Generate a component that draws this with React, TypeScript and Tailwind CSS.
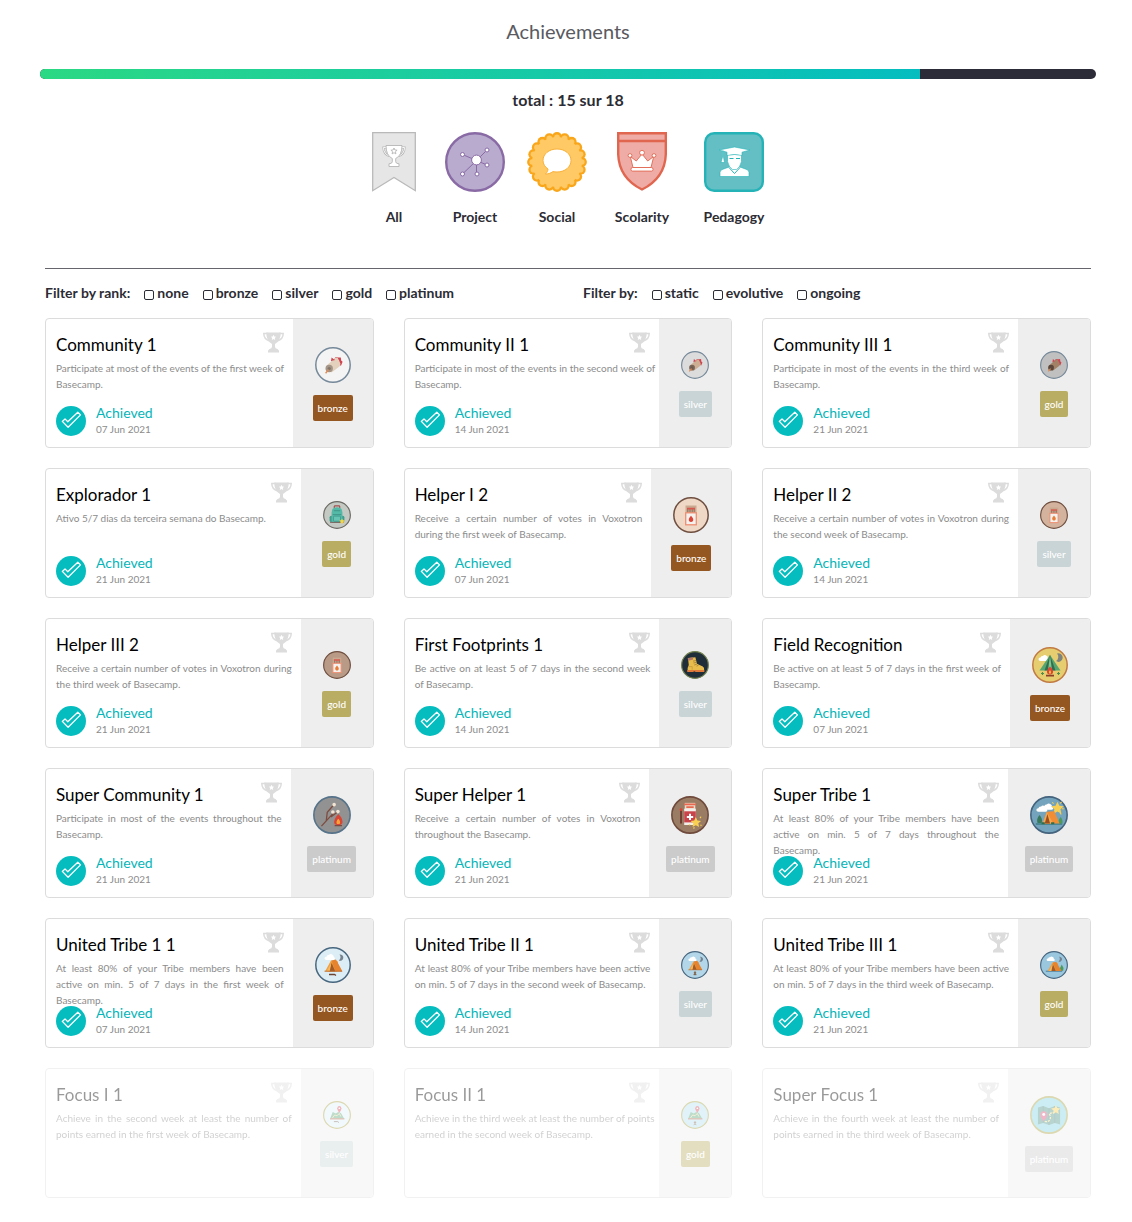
import type { ReactNode } from "react";

type Rank = "bronze" | "silver" | "gold" | "platinum";

type Achievement = {
  title: string;
  lines: string[];
  date?: string;
  rank: Rank;
  art: ReactNode;
};

const panelWidth: Record<Rank, string> = {
  bronze: "w-20",
  silver: "w-[72px]",
  gold: "w-[72px]",
  platinum: "w-[82px]",
};

const badgeSize: Record<Rank, string> = {
  bronze: "size-9",
  silver: "size-7",
  gold: "size-7",
  platinum: "size-[38px]",
};

const labelColor: Record<Rank, string> = {
  bronze: "bg-[#955721]",
  silver: "bg-[#c9d4d6]",
  gold: "bg-[#b9ad63]",
  platinum: "bg-[#cbcbcb]",
};

function Disc({ fill, ring, children }: { fill: string; ring: string; children: ReactNode }) {
  return (
    <svg viewBox="0 0 36 36" className="size-full" aria-hidden="true">
      <circle cx="18" cy="18" r="17.2" fill={fill} stroke={ring} strokeWidth="1.5" />
      {children}
    </svg>
  );
}

const Drum = ({ fill, body, end }: { fill: string; body: string; end: string }) => (
  <Disc fill={fill} ring="#75899a">
    <path d="M16 14l.6-3.6 2.6 2 1.2-2.2 3.400.4 2-.2.4 3 1.400 1.400-1.600 4z" fill="#cf4450" />
    <path d="M11.500 18.500l6-5 2-.3.300-2.200 2.800-.2 1.500 2.600 1.400 3.400-1 2.600-8 6z" fill={body} />
    <circle cx="14.200" cy="21.500" r="3.700" fill={end} />
    <circle cx="14.200" cy="21.500" r="1.600" fill="#5d4b43" opacity=".45" />
    <path d="M13.600 22.600l-3 3.600" stroke="#e08a52" strokeWidth="1.400" />
  </Disc>
);

const Backpack = () => (
  <Disc fill="#c5c9c3" ring="#6d6a64">
    <path d="M14.500 9V7.200q0-1 1-1h5q1 0 1 1V9" fill="none" stroke="#a0504e" strokeWidth="1.500" />
    <rect x="8.500" y="19" width="19" height="8" rx="2" fill="#3f9c8d" />
    <path d="M11 28V15q0-7 7-7t7 7v13z" fill="#55b9a8" />
    <path d="M14 12.500h8M12.500 17.500h11" stroke="#3a8e82" strokeWidth="1" />
    <rect x="13.500" y="19.500" width="9" height="6.500" rx="1" fill="#66c4b4" stroke="#3a8e82" strokeWidth=".8" />
    <path d="M9 27.500h18" stroke="#7d4a46" strokeWidth="1" fill="none" />
    <path d="M24.500 22.400l1.100 2.200 2.500.3-1.800 1.700.4 2.500-2.200-1.200-2.300 1.200.5-2.500-1.800-1.700 2.400-.3z" fill="#f8d648" />
  </Disc>
);

const Matches = ({ fill, flame }: { fill: string; flame: string }) => (
  <Disc fill={fill} ring="#6f4f40">
    <rect x="12.500" y="8.500" width="11" height="8" fill="#c9a98f" />
    <path d="M14.800 12v5M17 12v5M19.200 12v5M21.200 12v5" stroke="#8a6655" strokeWidth=".9" />
    <path d="M14 11.600h8" stroke="#d8584e" strokeWidth="1.800" />
    <rect x="12.700" y="15.800" width="10.600" height="12" fill="#f4f1ee" stroke="#ee8f73" strokeWidth="1.300" />
    <path d="M18 18.800q3 3 2 5.200-2 2.200-4 0-1-2.400 2-5.200z" fill={flame} />
  </Disc>
);

const Boot = () => (
  <Disc fill="#1f2e38" ring="#74824f">
    <path d="M9 9l9.500-1 2 8.500 7.500 3.400q2 1 1.800 5H8.500q-.4-3.500 1.500-7z" fill="#e8bd4c" />
    <path d="M8.500 9.200l7-1.200v3l-6 1.600z" fill="#b5776a" />
    <path d="M8 24.500h22v2.600H19l-2-1-1.500 1H8z" fill="#e0793a" />
    <path d="M15.500 13l4-.8M16 15.400l4-.8M17 18l3.400-1M20 19.400l2.400-1" stroke="#8a6a2a" strokeWidth=".8" />
    <path d="M9.400 20h5v4" fill="none" stroke="#c39a36" strokeWidth=".9" />
  </Disc>
);

const Cloud = ({ x = 0, y = 0 }: { x?: number; y?: number }) => (
  <path
    transform={`translate(${x} ${y})`}
    d="M8 13.500q-2 0-2-1.700t2-1.600q.4-2 2.400-1.600Q12 6.600 14 8.300q1.600.6 1.200 2.300 1.600.4 1.200 1.700-.3 1.200-1.600 1.200z"
    fill="#fff"
  />
);

const Field = () => (
  <Disc fill="#e6cd70" ring="#c17a42">
    <Cloud x={0.5} y={0.4} />
    <path d="M25 6.500a4.300 4.300 0 1 1-1 7.600 5 5 0 0 0 1-7.600z" fill="#7e8380" />
    <path d="M18 8L7.500 23.500h21z" fill="#57a670" />
    <path d="M18 8l-5.500 15.500h11z" fill="#2f6e4c" />
    <path d="M18 8l-2 15.500h4z" fill="#84c48f" />
    <path d="M18 19.500q4.500 4 2.600 7-2.600 2-5.200 0-1.800-3 2.600-7z" fill="#dc4632" />
    <path d="M18 23q1.800 2 .8 3.600h-1.600Q16.200 25 18 23z" fill="#f7c04c" />
    <path d="M14 28.600h8" stroke="#8b3f28" strokeWidth="1.600" />
    <path d="M10.500 25v3M9 26.500h3M26.500 25v3M25 26.500h3" stroke="#4d8f4a" strokeWidth="1.100" />
  </Disc>
);

const Campfire = () => (
  <Disc fill="#929292" ring="#56738a">
    <path d="M8 28.500L19.500 16M12.500 24l1-8.500 6-7M17 20l6.500-5" stroke="#7d4c3f" strokeWidth="1.200" fill="none" />
    <circle cx="20" cy="8.200" r="1.700" fill="#f2e4d2" />
    <circle cx="18.800" cy="15.200" r="1.700" fill="#f2e4d2" />
    <circle cx="23.600" cy="14.800" r="1.700" fill="#f2e4d2" />
    <path d="M24 17q5.500 5.500 3.400 9.500-3.400 2.500-7 0-1.600-4 3.600-9.500z" fill="#d64536" />
    <path d="M24 21.500q2.600 2.600 1.200 5h-2.600q-1.200-2.400 1.400-5z" fill="#f6a43a" />
    <path d="M20.500 28h7" stroke="#7d4c3f" strokeWidth="1.200" />
  </Disc>
);

const Star = ({ x, y, r = 1 }: { x: number; y: number; r?: number }) => (
  <path
    transform={`translate(${x} ${y}) scale(${r})`}
    d="M0-5l1.500 3.200 3.500.4-2.600 2.300.7 3.500L0 2.700l-3.100 1.700.7-3.500L-5-1.400l3.500-.4z"
    fill="#f8cf52"
  />
);

const MatchBottle = () => (
  <Disc fill="#997c63" ring="#6f4a3c">
    <rect x="13" y="6.500" width="10" height="7" fill="#ead9c8" />
    <path d="M12.500 8h11M14.500 10.500h7" stroke="#e8694f" strokeWidth="1.700" />
    <rect x="12.500" y="12" width="11" height="15.500" fill="#f2eee9" />
    <rect x="12.500" y="14.500" width="11" height="10.500" fill="#c9444a" />
    <path d="M18 16.800v6M15 19.800h6" stroke="#fff" strokeWidth="1.900" />
    <path d="M9.500 13v13" stroke="#6a3429" strokeWidth="1.600" />
    <circle cx="9.500" cy="13" r="1.300" fill="#d64536" />
    <Star x={23.5} y={25} />
    <path d="M28.500 19.500l-1 1.500M29 28l-1.200-.6M21.500 31l.5-1.500M17 27.500l1.200-.4" stroke="#f8cf52" strokeWidth="1" />
  </Disc>
);

const OrangeTent = () => (
  <>
    <path d="M16 13.500L10 24.500h12l1-10z" fill="#f0a03f" />
    <path d="M16.500 13.500l4.500-1 6.500 12h-7z" fill="#e5832f" />
    <path d="M16.500 15.500l-2.800 9h6.600z" fill="#a35a26" />
    <path d="M16.500 15.500l-5 9h3.200z" fill="#f7b85e" />
  </>
);

const SuperTribe = () => (
  <Disc fill="#74a3bd" ring="#44637d">
    <Cloud x={5.5} y={-0.5} />
    <Cloud x={0} y={1.5} />
    <Star x={26} y={11.5} r={1.2} />
    <path d="M30 5.500l-1.500 1.500M32 12h-1.800M29.500 17.500l-1-1.500M21 6l1.400 1.200" stroke="#f8cf52" strokeWidth="1" />
    <path d="M5.500 26.500h25" stroke="#3f7f86" strokeWidth="1.400" />
    <path d="M9 18q3.500 4 2 7.500H7.200Q5.600 22 9 18z" fill="#37795a" />
    <path d="M29 20q2.600 3.400 1.600 6h-3.400q-1-2.600 1.800-6z" fill="#4c9a5c" />
    <path d="M16 15l7-.5 5 11.500H12z" fill="#f08d35" />
    <path d="M16 15l-4 11h10z" fill="#f5a74b" />
    <path d="M16.500 17l-2.500 9h5z" fill="#9a4f22" />
    <path d="M11 25.800h3M20 25.800h3" stroke="#2f6e4c" strokeWidth="1.800" />
  </Disc>
);

const Tribe = ({ fill, level }: { fill: string; level: 1 | 2 | 3 }) => (
  <Disc fill={fill} ring="#48677f">
    <Cloud x={level === 3 ? 2.5 : 3.5} y={-0.5} />
    <path d="M24.500 7.500a3.200 3.200 0 1 1-.8 6 4 4 0 0 0 .8-6z" fill="#76838e" />
    {level === 3 ? (
      <>
        <path d="M7.500 26h21" stroke="#4b7d94" strokeWidth="1.200" />
        <path d="M28 17.500q3 4 1.800 8h-3.600q-1.200-4 1.800-8z" fill="#4c9a5c" />
        <g transform="translate(0 1.200)">
          <OrangeTent />
        </g>
      </>
    ) : (
      <>
        <OrangeTent />
        <path d="M9.500 24.200h17.500" stroke="#b9713a" strokeWidth=".9" />
      </>
    )}
    {level === 1 && <path d="M14 27.500h5.500l1.500 1" stroke="#6c4433" strokeWidth="1.300" fill="none" />}
    {level === 2 && <path d="M18 26v3l-1.600 2M18 29l1.600 2M16.500 28h3" stroke="#7d5a41" strokeWidth="1.300" fill="none" />}
  </Disc>
);

const Focus = ({ fill, level }: { fill: string; level: 1 | 2 }) => (
  <Disc fill={fill} ring="#a89f3c">
    <path d="M9 23l3.500-9 4 2 3-2 3.500 1.500L27.500 23z" fill="#5aa879" />
    <path d="M12 22l3-4 3 1 3-3 2 4" stroke="#e9d9a6" strokeWidth="1.200" fill="none" />
    <path d="M9 23h18.500" stroke="#c26a55" strokeWidth="1.400" />
    <path d="M21 15.500q-3-4-2.700-6.300Q18.700 6.500 21 6.500t2.700 2.700Q24 11.500 21 15.500z" fill="#dc4a55" />
    <circle cx="21" cy="9.300" r="1.100" fill="#fff" />
    {level === 1 ? (
      <path d="M14 26.500h5l1.500 1.300" stroke="#6c5a50" strokeWidth="1.200" fill="none" />
    ) : (
      <path d="M18 26v3l-1.500 2M18 29l1.500 2M16.500 27.500h3" stroke="#7d5a41" strokeWidth="1.200" fill="none" />
    )}
  </Disc>
);

const SuperFocus = () => (
  <Disc fill="#7fd2e2" ring="#a89f3c">
    <path d="M7.500 11l5-1.500 5.500 2 5.500-2 5 1.500v16l-5-1.500-5.500 2-5.500-2-5 1.500z" fill="#4f9488" />
    <path d="M12.500 9.500v16M18 11.500v16M23.500 9.500v16" stroke="#3a7a74" strokeWidth=".7" />
    <path d="M14 24q4 1 5-2t-1-5q4-2 6-1" stroke="#f4df8f" strokeWidth="1.200" strokeDasharray="2 1" fill="none" />
    <path d="M13 24q-3.500-4-3.200-6.500.4-3 3.200-3t3.200 3Q16.500 20 13 24z" fill="#dc4a75" />
    <circle cx="13" cy="17.500" r="1.400" fill="#fff" />
    <Star x={24.5} y={13} r={0.9} />
  </Disc>
);

const achievements: Achievement[] = [
  { title: "Community 1", lines: ["Participate at most of the events of the first week of", "Basecamp."], date: "07 Jun 2021", rank: "bronze", art: <Drum fill="#f4f4f4" body="#e3d0bd" end="#a39588" /> },
  { title: "Community II 1", lines: ["Participate in most of the events in the second week of", "Basecamp."], date: "14 Jun 2021", rank: "silver", art: <Drum fill="#dcdcdc" body="#cdae93" end="#7a6557" /> },
  { title: "Community III 1", lines: ["Participate in most of the events in the third week of", "Basecamp."], date: "21 Jun 2021", rank: "gold", art: <Drum fill="#c0c0c0" body="#a38167" end="#5c463b" /> },
  { title: "Explorador 1", lines: ["Ativo 5/7 dias da terceira semana do Basecamp."], date: "21 Jun 2021", rank: "gold", art: <Backpack /> },
  { title: "Helper I 2", lines: ["Receive a certain number of votes in Voxotron", "during the first week of Basecamp."], date: "07 Jun 2021", rank: "bronze", art: <Matches fill="#f0d8c6" flame="#dd4336" /> },
  { title: "Helper II 2", lines: ["Receive a certain number of votes in Voxotron during", "the second week of Basecamp."], date: "14 Jun 2021", rank: "silver", art: <Matches fill="#d3b39e" flame="#e87b35" /> },
  { title: "Helper III 2", lines: ["Receive a certain number of votes in Voxotron during", "the third week of Basecamp."], date: "21 Jun 2021", rank: "gold", art: <Matches fill="#b99a87" flame="#e87b35" /> },
  { title: "First Footprints 1", lines: ["Be active on at least 5 of 7 days in the second week", "of Basecamp."], date: "14 Jun 2021", rank: "silver", art: <Boot /> },
  { title: "Field Recognition", lines: ["Be active on at least 5 of 7 days in the first week of", "Basecamp."], date: "07 Jun 2021", rank: "bronze", art: <Field /> },
  { title: "Super Community 1", lines: ["Participate in most of the events throughout the", "Basecamp."], date: "21 Jun 2021", rank: "platinum", art: <Campfire /> },
  { title: "Super Helper 1", lines: ["Receive a certain number of votes in Voxotron", "throughout the Basecamp."], date: "21 Jun 2021", rank: "platinum", art: <MatchBottle /> },
  { title: "Super Tribe 1", lines: ["At least 80% of your Tribe members have been", "active on min. 5 of 7 days throughout the", "Basecamp."], date: "21 Jun 2021", rank: "platinum", art: <SuperTribe /> },
  { title: "United Tribe 1 1", lines: ["At least 80% of your Tribe members have been", "active on min. 5 of 7 days in the first week of", "Basecamp."], date: "07 Jun 2021", rank: "bronze", art: <Tribe fill="#dcedf6" level={1} /> },
  { title: "United Tribe II 1", lines: ["At least 80% of your Tribe members have been active", "on min. 5 of 7 days in the second week of Basecamp."], date: "14 Jun 2021", rank: "silver", art: <Tribe fill="#b3d7e9" level={2} /> },
  { title: "United Tribe III 1", lines: ["At least 80% of your Tribe members have been active", "on min. 5 of 7 days in the third week of Basecamp."], date: "21 Jun 2021", rank: "gold", art: <Tribe fill="#9ac6de" level={3} /> },
  { title: "Focus I 1", lines: ["Achieve in the second week at least the number of", "points earned in the first week of Basecamp."], rank: "silver", art: <Focus fill="#dcf0f8" level={1} /> },
  { title: "Focus II 1", lines: ["Achieve in the third week at least the number of points", "earned in the second week of Basecamp."], rank: "gold", art: <Focus fill="#b3e0ee" level={2} /> },
  { title: "Super Focus 1", lines: ["Achieve in the fourth week at least the number of", "points earned in the third week of Basecamp."], rank: "platinum", art: <SuperFocus /> },
];

function Trophy() {
  return (
    <svg viewBox="0 0 21 21" className="mt-[2px] size-[21px] shrink-0" aria-hidden="true">
      <path d="M5 1.600H.8q0 6 6 7.300M16 1.600h4.200q0 6-6 7.300" fill="none" stroke="#dcdcdc" strokeWidth="1.500" />
      <path d="M3.200.5h14.600q0 8.500-5.800 11.500v2.700q0 1.800 2.500 2.300.8.200.8 1.300h.7v2.200H5v-2.200h.7q0-1.100.8-1.300Q9 16.500 9 14.700V12Q3.200 9 3.200.5z" fill="#dcdcdc" />
      <path d="M10.500 2.800l.8 1.700 1.900.2-1.400 1.300.4 1.900-1.700-1-1.700 1 .4-1.900L7.800 4.700l1.900-.2z" fill="#fff" />
    </svg>
  );
}

function DoneMark() {
  return (
    <svg viewBox="0 0 30 30" className="size-[30px] shrink-0" aria-hidden="true">
      <circle cx="15" cy="15" r="15" fill="#05bdbf" />
      <path d="M6.300 15.400L9 12.900l2.800 2.900 10-9.600 2.700 2.700L12.100 21.300z" fill="none" stroke="#fff" strokeWidth="1.300" strokeLinejoin="round" />
    </svg>
  );
}

function Card({ item }: { item: Achievement }) {
  return (
    <article
      className={`flex overflow-hidden rounded border border-[#dcdcdc] bg-white ${item.date ? "" : "opacity-40"}`}
    >
      <div className="min-w-0 flex-1 py-[11px] pr-[9px] pl-[10px]">
        <div className="flex h-[30px] items-start justify-between">
          <h2 className="text-[17px] leading-[30px] whitespace-nowrap text-black">{item.title}</h2>
          <Trophy />
        </div>
        <p className="h-[46px] text-[10px] leading-4 text-[#8c8c8c]">
          {item.lines.map((line) => (
            <span
              key={line}
              className="block whitespace-nowrap [text-align-last:justify] last:[text-align-last:left]"
            >
              {line}{" "}
            </span>
          ))}
        </p>
        <div className="flex h-[30px] items-center gap-[10px]">
          {item.date && (
            <>
              <DoneMark />
              <div className="leading-4">
                <p className="text-sm leading-4 text-[#05b5b8]">Achieved</p>
                <p className="text-[10px] leading-4 text-[#8c8c8c]">{item.date}</p>
              </div>
            </>
          )}
        </div>
      </div>
      <div className={`flex shrink-0 flex-col items-center justify-center gap-3 bg-[#eeeeee] pt-[2px] ${panelWidth[item.rank]}`}>
        <div className={badgeSize[item.rank]}>{item.art}</div>
        <span className={`rounded-xs px-[5px] text-[10px] leading-[26px] font-medium text-white ${labelColor[item.rank]}`}>
          {item.rank}
        </span>
      </div>
    </article>
  );
}

const AllIcon = () => (
  <svg viewBox="0 0 60 60" className="size-[60px]" aria-hidden="true">
    <path d="M8.700.7h42.600v58L30 45.500 8.700 58.700z" fill="#e6e6e6" stroke="#b9b9b9" strokeWidth="1.300" />
    <g fill="#fff" stroke="#b5b5b5" strokeWidth=".9">
      <path d="M23 15.500h-3.500q0 6.500 6 8.500M37 15.500h3.500q0 6.500-6 8.500" fill="none" stroke="#b5b5b5" strokeWidth="2.200" />
      <path d="M23 15.500h-3.500q0 6.500 6 8.500M37 15.500h3.500q0 6.500-6 8.500" fill="none" stroke="#fff" strokeWidth=".9" />
      <path d="M22 13.500h16q0 10-6.300 13v3.200q0 1.500 2.300 2h1v2.800H25v-2.800h1q2.300-.5 2.300-2v-3.200Q22 23.500 22 13.500z" />
      <path d="M30 16l.9 2 2.200.2-1.700 1.500.5 2.200-1.900-1.200-1.900 1.200.5-2.200-1.700-1.500 2.200-.2z" />
    </g>
  </svg>
);

const ProjectIcon = () => (
  <svg viewBox="0 0 60 60" className="size-[60px]" aria-hidden="true">
    <circle cx="30" cy="30" r="28.800" fill="#b8abce" stroke="#896aa5" strokeWidth="2.400" />
    <g stroke="#896aa5" strokeWidth="1">
      <path d="M31.500 28.500L17.500 22.500M31.500 28.500L42 18M31.500 28.500L42 33M31.500 28.500v13.500M31.500 28.500L17.500 42" />
      <g fill="#fff">
        <circle cx="31.500" cy="28" r="4.900" />
        <circle cx="17.500" cy="22.500" r="2" />
        <circle cx="42" cy="18" r="2" />
        <circle cx="42" cy="33" r="2" />
        <circle cx="32" cy="42" r="2" />
        <circle cx="17.500" cy="42" r="2" />
      </g>
    </g>
  </svg>
);

const petals = Array.from({ length: 20 }, (_, i) => {
  const a = (i * Math.PI) / 10;
  return { x: 30 + 24.8 * Math.cos(a), y: 30 + 24.8 * Math.sin(a) };
});

const SocialIcon = () => (
  <svg viewBox="0 0 60 60" className="size-[60px]" aria-hidden="true">
    {petals.map((p, i) => (
      <circle key={i} cx={p.x} cy={p.y} r="5.100" fill="#f9a61a" />
    ))}
    {petals.map((p, i) => (
      <circle key={i} cx={p.x} cy={p.y} r="2.800" fill="#ffc965" />
    ))}
    <circle cx="30" cy="30" r="25" fill="#ffc965" />
    <path d="M30 17c8 0 14 5 14 11.500S38 40 30 40c-1.500 0-2.600-.1-4-.4-2.500 1.800-5 2.500-7.600 2.400 1.700-1.600 2.500-3 2.600-5-3-2-5-5-5-8.500C16 22 22 17 30 17z" fill="#fff" stroke="#f9b13a" strokeWidth="1" />
  </svg>
);

const ScolarityIcon = () => (
  <svg viewBox="0 0 60 60" className="size-[60px]" aria-hidden="true">
    <path d="M6.200 1.200h47.600v21Q53 46 30 57.500 7 46 6.200 22.200z" fill="#efaba5" stroke="#e0664f" strokeWidth="2.400" />
    <path d="M6 9h48" stroke="#e0664f" strokeWidth="2.600" />
    <g fill="#fff" stroke="#e0664f" strokeWidth=".9">
      <path d="M21 35.500l-2.700-11 6 4.500L30 22l5.700 7 6-4.500-2.700 11z" />
      <rect x="19" y="35.500" width="22" height="3.600" rx="1.600" />
      <circle cx="18" cy="23.500" r="1.900" />
      <circle cx="30" cy="20.700" r="2.400" />
      <circle cx="42" cy="23.500" r="1.900" />
    </g>
  </svg>
);

const PedagogyIcon = () => (
  <svg viewBox="0 0 60 60" className="size-[60px]" aria-hidden="true">
    <rect x="1.200" y="1.200" width="57.600" height="57.600" rx="9" fill="#63bfc4" stroke="#25b3b7" strokeWidth="2.400" />
    <g fill="#fff" stroke="#25b3b7" strokeWidth=".6">
      <path d="M16 44.500v-4q0-2.500 3-3.300l6-2.200h11l6 2.200q3 .8 3 3.300v4z" />
      <path d="M23.500 22.500h14v7q-1.500 6-5 8h-4q-3.500-2-5-8z" />
      <path d="M15 18l15.500-3L46 18l-8 2.200v3.300q-7.500-2-15 0v-3.300z" />
      <path d="M18.500 19v6l-1.500 5.500h3.500l-1-5.500v-6z" />
      <path d="M25 35.500l5.500 6 5.500-6" fill="none" strokeWidth="1" />
      <path d="M25.500 26.500h4M32 26.500h4" strokeWidth="1" />
    </g>
  </svg>
);

const categories = [
  { name: "All", width: "w-[60px]", icon: <AllIcon /> },
  { name: "Project", width: "w-[60px]", icon: <ProjectIcon /> },
  { name: "Social", width: "w-[62px]", icon: <SocialIcon /> },
  { name: "Scolarity", width: "w-[66px]", icon: <ScolarityIcon /> },
  { name: "Pedagogy", width: "w-[76px]", icon: <PedagogyIcon /> },
];

function Filters({ legend, options }: { legend: string; options: string[] }) {
  return (
    <div role="group" aria-label={legend} className="flex items-center gap-[14px]">
      <span>{legend}</span>
      {options.map((option) => (
        <label key={option} className="flex items-center gap-[3px]">
          <input
            type="checkbox"
            className="mt-[3px] size-[10px] appearance-none rounded-[2px] border border-[#2c2c34] bg-white checked:bg-[#05bdbf]"
          />
          {option}
        </label>
      ))}
    </div>
  );
}

const earned = 15;
const available = 18;

export default function App() {
  return (
    <main className="min-h-screen bg-white pr-9 pb-6 pl-10 font-['Lato',sans-serif] text-[#2c2c34]">
      <h1 className="pt-[15px] text-center text-xl leading-8 text-[#5a5a5f]">Achievements</h1>
      <div className="mt-[22px] h-[10px] overflow-hidden rounded-full bg-[#2c2b38]">
        <div
          className="h-full bg-linear-to-r from-[#2bd883] to-[#05bdbf]"
          style={{ width: `${(earned / available) * 100}%` }}
        />
      </div>
      <p className="mt-[9px] text-center text-base leading-6 font-bold">
        total : {earned} sur {available}
      </p>
      <nav className="mt-5 flex justify-center gap-[21px]">
        {categories.map((category) => (
          <button
            key={category.name}
            type="button"
            className={`flex flex-col items-center gap-[15px] text-sm leading-5 font-bold ${category.width}`}
          >
            {category.icon}
            {category.name}
          </button>
        ))}
      </nav>
      <div className="mx-[5px] mt-[41px] border-t border-[#66656d]">
        <div className="grid grid-cols-2 gap-[30px] pt-[14px] text-sm leading-5 font-bold">
          <Filters legend="Filter by rank:" options={["none", "bronze", "silver", "gold", "platinum"]} />
          <Filters legend="Filter by:" options={["static", "evolutive", "ongoing"]} />
        </div>
        <div className="mt-[15px] grid grid-cols-3 gap-x-[30px] gap-y-5">
          {achievements.map((item) => (
            <Card key={item.title} item={item} />
          ))}
        </div>
      </div>
    </main>
  );
}
